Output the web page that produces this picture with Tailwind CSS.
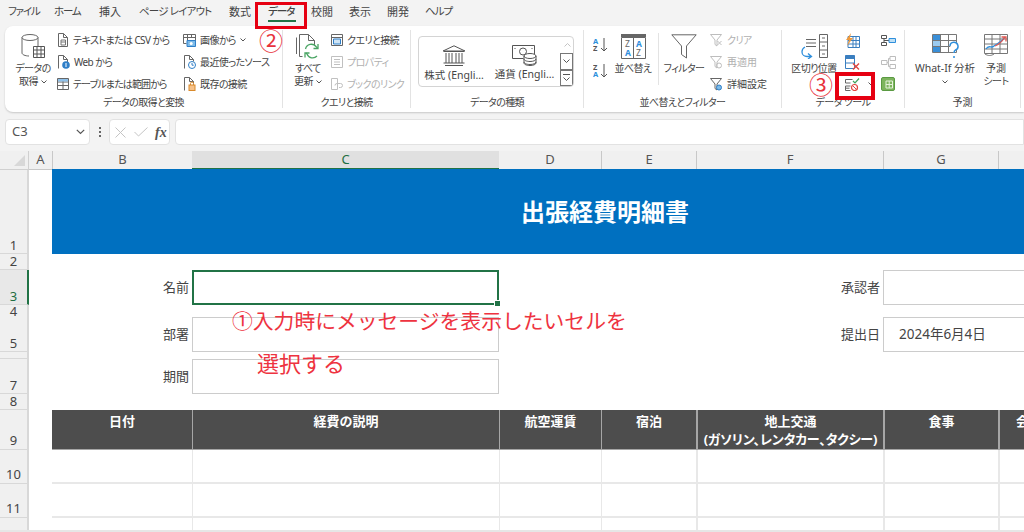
<!DOCTYPE html>
<html lang="ja">
<head>
<meta charset="utf-8">
<script src="https://cdn.jsdelivr.net/npm/@tailwindcss/browser@4"></script>
</head>
<body>
<div class="relative w-[1024px] h-[532px] overflow-hidden bg-[#f3f3f3] text-[#3c3c3c] font-['Noto_Sans','Noto_Sans_CJK_JP',sans-serif] [font-feature-settings:'palt']">

  <!-- tabs -->
  <div class="flex h-[26px] items-center text-[11px] text-[#444] leading-none pb-[3px]">
    <span class="ml-[8px] w-[46px] tracking-[-1.2px] text-[10.5px]">ファイル</span>
    <span class="w-[45px] tracking-[-1.2px] text-[10.5px]">ホーム</span>
    <span class="w-[40px]">挿入</span>
    <span class="w-[90px] tracking-[-0.8px] text-[10.5px]">ページ レイアウト</span>
    <span class="w-[39px]">数式</span>
    <span class="relative w-[43px] font-medium tracking-[-1px] text-[10.5px]">データ<span class="absolute left-0 top-[14px] w-[28px] h-[2px] bg-[#217346]"></span></span>
    <span class="w-[38px]">校閲</span>
    <span class="w-[38px]">表示</span>
    <span class="w-[38px]">開発</span>
    <span class="tracking-[-1px] text-[10.5px]">ヘルプ</span>
  </div>

  <!-- ribbon -->
  <div class="ml-[5px] h-[86px] flex bg-white rounded-l-lg shadow-[0_1px_2px_rgba(0,0,0,0.18)] text-[10px] tracking-[-0.6px] whitespace-nowrap leading-[13px] text-[#444]">

    <!-- group 1 -->
    <div class="w-[277px] flex flex-col">
      <div class="h-[69px] pt-[3px] pl-[8px] flex">
        <div class="w-[40px] flex flex-col items-center pt-[5px]">
          <svg class="w-[24px] h-[25px]" viewBox="0 0 24 25" fill="none" stroke="#666" stroke-width="1"><ellipse cx="9" cy="3.500" rx="8" ry="3"/><path d="M1 3.500V19c0 1.500 3 3 7 3M17 3.500V12"/><path d="M12.500 12.500h11v11h-11zM12.500 16h11M12.500 20h11M16 12.500v11M20 12.500v11" stroke="#555"/></svg>
          <span class="mt-[3px]">データの</span>
          <span class="flex items-center gap-[3px]">取得<svg class="w-[6px] h-[4px]" viewBox="0 0 6 4" fill="none" stroke="#555"><path d="M.5.500 3 3 5.500.5"/></svg></span>
        </div>
        <div class="ml-[5px] w-[125px] flex flex-col">
          <div class="h-[22px] flex items-center gap-[5px]">
            <svg class="w-[10px] h-[14px]" viewBox="0 0 10 14" fill="none" stroke="#666"><path d="M.5.500h5l4 4v9h-9z"/><path d="M5.500.5v4h4"/><path d="M3 7h4.500v5H3zM3 9h4.500" stroke="#777"/></svg>
            <span>テキストまたは CSV から</span>
          </div>
          <div class="h-[22px] flex items-center gap-[4px]">
            <svg class="w-[12px] h-[14px]" viewBox="0 0 12 14" fill="none" stroke="#666"><path d="M.5 13.500V.5h5l4 4v3M5.500.5v4h4"/><circle cx="8" cy="10" r="3.800" fill="#2f7fc8" stroke="none"/><path d="M8 8v4" stroke="#fff"/></svg>
            <span>Web から</span>
          </div>
          <div class="h-[22px] flex items-center gap-[4px] -ml-[1px]">
            <svg class="w-[12px] h-[12px]" viewBox="0 0 12 12" fill="none" stroke="#666"><path d="M.5.500h11v11H.5zM.5 4h11M.5 7.500h11M6 .5v11"/><path d="M1 1h10v2.500H1z" fill="#8fc1ea" stroke="none"/></svg>
            <span class="tracking-[-0.9px]">テーブルまたは範囲から</span>
          </div>
        </div>
        <div class="flex flex-col">
          <div class="h-[22px] flex items-center gap-[4px]">
            <svg class="w-[13px] h-[13px]" viewBox="0 0 13 13" fill="none" stroke="#666"><path d="M.5.500h12v7M.5.500v9h3M.5 3.500h12M4.500.5v6M8.500.5v3"/><path d="M4 6.500h8.500v6H4z" fill="#7dbbe8" stroke="#2f7fc8"/><circle cx="8.200" cy="9.500" r="1.500" fill="#fff" stroke="none"/></svg>
            <span class="flex items-center gap-[4px]">画像から<svg class="w-[6px] h-[4px]" viewBox="0 0 6 4" fill="none" stroke="#555"><path d="M.5.500 3 3 5.500.5"/></svg></span>
          </div>
          <div class="h-[22px] flex items-center gap-[4px] pl-[1px]">
            <svg class="w-[12px] h-[14px]" viewBox="0 0 12 14" fill="none" stroke="#666"><path d="M.5 13.500V.5h5l4 4v2M5.500.5v4h4"/><circle cx="8" cy="10" r="3.500" fill="#fff" stroke="#2f7fc8"/><path d="M8 8v2.200h1.700" stroke="#2f7fc8"/></svg>
            <span>最近使ったソース</span>
          </div>
          <div class="h-[22px] flex items-center gap-[4px] pl-[1px]">
            <svg class="w-[12px] h-[14px]" viewBox="0 0 12 14" fill="none" stroke="#666"><path d="M.5 13.500V.5h5l4 4v2M5.500.5v4h4"/><rect x="5" y="8" width="6" height="5.500" fill="#f6c28b" stroke="#d98a2b"/><path d="M6.500 8V6.500a1.500 1.500 0 0 1 3 0V8" stroke="#d98a2b"/></svg>
            <span>既存の接続</span>
          </div>
        </div>
      </div>
      <div class="text-center pt-[1px]">データの取得と変換</div>
    </div>
    <div class="w-px my-[4px] bg-[#e3e3e3]"></div>

    <!-- group 2 -->
    <div class="w-[127px] flex flex-col">
      <div class="h-[69px] pt-[3px] pl-[5px] flex">
        <div class="w-[40px] flex flex-col items-center pt-[5px]">
          <svg class="w-[26px] h-[25px]" viewBox="0 0 26 25" fill="none" stroke="#666"><path d="M1.500 20V3.500M4.500 22.500V.5h9l6 6v5M13.500.5v6h6M4.500 22.500h3"/><path d="M10.500 15a6 6 0 0 1 10.500-2.500l1.500 1.500M22 22a6 6 0 0 1-10-2l-1-1" stroke="#4aa564" stroke-width="1.300"/><path d="M23 10v4.500h-4.500M10 23.500V19h4.500" stroke="#4aa564" stroke-width="1.300"/></svg>
          <span class="mt-[3px]">すべて</span>
          <span class="flex items-center gap-[3px]">更新<svg class="w-[6px] h-[4px]" viewBox="0 0 6 4" fill="none" stroke="#555"><path d="M.5.500 3 3 5.500.5"/></svg></span>
        </div>
        <div class="ml-[3px] flex flex-col">
          <div class="h-[22px] flex items-center gap-[4px]">
            <svg class="w-[12px] h-[12px]" viewBox="0 0 12 12" fill="none" stroke="#666"><path d="M.5.500h11v11H.5zM.5 3.500h11"/><path d="M2.500 5h7v5h-7z" fill="#cfe5f6" stroke="#2f7fc8"/></svg>
            <span>クエリと接続</span>
          </div>
          <div class="h-[22px] flex items-center gap-[4px] text-[#b0b0b0]">
            <svg class="w-[12px] h-[12px]" viewBox="0 0 12 12" fill="none" stroke="#c0c0c0"><path d="M.5.500h11v11H.5zM3 3.500h6M3 6h6M3 8.500h6"/></svg>
            <span>プロパティ</span>
          </div>
          <div class="h-[22px] flex items-center gap-[4px] text-[#b0b0b0]">
            <svg class="w-[12px] h-[12px]" viewBox="0 0 12 12" fill="none" stroke="#c0c0c0"><path d="M.5.500h6v11h-6zM4 7.500a2 2 0 0 1 2-2h3.500a2 2 0 0 1 0 4H8"/></svg>
            <span>ブックのリンク</span>
          </div>
        </div>
      </div>
      <div class="text-center pt-[1px]">クエリと接続</div>
    </div>
    <div class="w-px my-[4px] bg-[#e3e3e3]"></div>

    <!-- group 3 -->
    <div class="w-[172px] flex flex-col">
      <div class="h-[69px] pt-[10px] pl-[7px]">
        <div class="w-[156px] h-[51px] flex border border-[#d4d4d4] rounded-[4px] overflow-hidden">
          <div class="w-[70px] flex flex-col items-center pt-[8px]">
            <svg class="w-[24px] h-[21px]" viewBox="0 0 24 21" fill="none" stroke="#555"><path d="M12 .8 23 6H1zM2 6.500h20M3 20.500h18M1.500 18h21M4 8v10M7 8v10M10 8v10M14 8v10M17 8v10M20 8v10"/></svg>
            <span class="mt-[3px] text-[10.5px] tracking-normal">株式 (Engli…</span>
          </div>
          <div class="w-[71px] flex flex-col items-center pt-[7px]">
            <svg class="w-[25px] h-[22px]" viewBox="0 0 25 22" fill="none" stroke="#555"><path d="M.5 1.500h22v11h-6M.5 1.500v13h11"/><circle cx="11" cy="7.500" r="3.500"/><path d="M3 4v1M20 4v1"/><ellipse cx="18" cy="12" rx="6" ry="2.500" fill="#fff"/><path d="M12 12v7c0 1.400 2.700 2.500 6 2.500s6-1.100 6-2.500v-7M12 15c0 1.400 2.700 2.500 6 2.500s6-1.100 6-2.500M12 18c0 1.400 2.700 2.500 6 2.500s6-1.100 6-2.500"/></svg>
            <span class="mt-[2px] text-[10.5px] tracking-normal">通貨 (Engli…</span>
          </div>
          <div class="ml-[1px] flex-1 flex flex-col items-stretch">
            <div class="h-[17px] flex items-center justify-center"><svg class="w-[7px] h-[4px]" viewBox="0 0 7 4" fill="none" stroke="#c4c4c4"><path d="M.5 3.500 3.500.5l3 3"/></svg></div>
            <div class="h-[17px] flex items-center justify-center border border-[#777] -ml-px"><svg class="w-[7px] h-[4px]" viewBox="0 0 7 4" fill="none" stroke="#555"><path d="M.5.500l3 3 3-3"/></svg></div>
            <div class="h-[17px] flex flex-col gap-[2px] items-center justify-center border border-[#777] -ml-px"><span class="w-[7px] h-px bg-[#555]"></span><svg class="w-[7px] h-[4px]" viewBox="0 0 7 4" fill="none" stroke="#555"><path d="M.5.500l3 3 3-3"/></svg></div>
          </div>
        </div>
      </div>
      <div class="text-center pt-[1px]">データの種類</div>
    </div>
    <div class="w-px my-[4px] bg-[#e3e3e3]"></div>

    <!-- group 4 -->
    <div class="w-[197px] flex flex-col">
      <div class="h-[69px] pt-[3px] pl-[9px] flex">
        <div class="w-[15px] flex flex-col pt-[8px] gap-[11px] tracking-normal">
          <svg class="w-[15px] h-[15px]" viewBox="0 0 15 15" fill="none"><text x="0" y="6.500" font-size="7.500" font-weight="700" fill="#2f8fdc">A</text><text x="0" y="14" font-size="7.500" font-weight="700" fill="#555">Z</text><path d="M11 1v13M8 11l3 3 3-3" stroke="#555"/></svg>
          <svg class="w-[15px] h-[15px]" viewBox="0 0 15 15" fill="none"><text x="0" y="6.500" font-size="7.500" font-weight="700" fill="#555">Z</text><text x="0" y="14" font-size="7.500" font-weight="700" fill="#2f8fdc">A</text><path d="M11 1v13M8 11l3 3 3-3" stroke="#555"/></svg>
        </div>
        <div class="ml-[5px] w-[40px] flex flex-col items-center pt-[5px]">
          <svg class="w-[25px] h-[25px] tracking-normal" viewBox="0 0 25 25" fill="none"><path d="M.5 3.500h24v21H.5zM12.500 3.500v21" stroke="#666"/><path d="M0 0h25v3H0z" fill="#666"/><text x="4" y="13" font-size="8.500" fill="#666">Z</text><text x="4" y="22" font-size="8.500" font-weight="700" fill="#2f8fdc">A</text><text x="15" y="13" font-size="8.500" font-weight="700" fill="#2f8fdc">A</text><text x="15" y="22" font-size="8.500" fill="#666">Z</text></svg>
          <span class="mt-[3px]">並べ替え</span>
        </div>
        <div class="ml-[5px] w-px h-[52px] mt-[4px] bg-[#e3e3e3]"></div>
        <div class="ml-[5px] w-[40px] flex flex-col items-center pt-[5px]">
          <svg class="w-[26px] h-[25px]" viewBox="0 0 26 25" fill="none" stroke="#666"><path d="M.8.800h24.400L15.500 12v12l-5-3.500V12z"/></svg>
          <span class="mt-[3px]">フィルター</span>
        </div>
        <div class="ml-[6px] flex flex-col">
          <div class="h-[22px] flex items-center gap-[5px] text-[#b0b0b0]">
            <svg class="w-[12px] h-[13px]" viewBox="0 0 12 13" fill="none" stroke="#bdbdbd"><path d="M.5.500h11L7 6v6L5 10.500V6zM7.500 7l4 4M11.500 7l-4 4"/></svg>
            <span>クリア</span>
          </div>
          <div class="h-[22px] flex items-center gap-[5px] text-[#b0b0b0]">
            <svg class="w-[12px] h-[13px]" viewBox="0 0 12 13" fill="none" stroke="#bdbdbd"><path d="M.5.500h11L7 6v6L5 10.500V6z"/><circle cx="9" cy="9.500" r="2.500"/></svg>
            <span class="tracking-normal">再適用</span>
          </div>
          <div class="h-[22px] flex items-center gap-[5px]">
            <svg class="w-[12px] h-[13px]" viewBox="0 0 12 13" fill="none" stroke="#666"><path d="M.5.500h11L7 6v6L5 10.500V6z"/><circle cx="9" cy="9.500" r="2.500" fill="#7dbbe8" stroke="#2f7fc8"/></svg>
            <span class="tracking-normal">詳細設定</span>
          </div>
        </div>
      </div>
      <div class="text-center pt-[1px]">並べ替えとフィルター</div>
    </div>
    <div class="w-px my-[4px] bg-[#e3e3e3]"></div>

    <!-- group 5 -->
    <div class="w-[122px] flex flex-col">
      <div class="h-[69px] pt-[3px] pl-[7px] flex">
        <div class="w-[50px] flex flex-col items-center pt-[5px]">
          <svg class="w-[28px] h-[25px]" viewBox="0 0 28 25" fill="none"><path d="M6 5.500h10M6 9h10M6 12.500h10" stroke="#666"/><path d="M19.500.5h8v23h-8zM19.500 8h8M19.500 16h8M22 4h3M22 12h3M22 20h3" stroke="#666"/><path d="M5 13a5.500 5.500 0 0 0-3 5c0 2.800 2.500 4.500 5 4.500h4M8 19.500l3.500 3-3.500 2.500" stroke="#2f8fdc" stroke-width="1.300"/></svg>
          <span class="mt-[3px]">区切り位置</span>
        </div>
        <div class="ml-[6px] w-[30px] flex flex-col">
          <div class="h-[22px] flex items-center">
            <svg class="w-[15px] h-[15px]" viewBox="0 0 15 15" fill="none"><path d="M3 3.500h11.500v11H3zM3 7.500h11.500M3 11h11.500M8 3.500v11M11 3.500v11" stroke="#3a7fc0"/><path d="M6 0 1 7h3l-2 6 6-8H5z" fill="#ef9a3c"/></svg>
          </div>
          <div class="h-[22px] flex items-center">
            <svg class="w-[15px] h-[15px]" viewBox="0 0 15 15" fill="none"><path d="M.5.500h9v13h-9z" stroke="#3a7fc0"/><path d="M.5.500h9v3.500h-9z" fill="#3a7fc0"/><path d="M.5 8h9" stroke="#3a7fc0"/><path d="M8 8.500l6 6M14 8.500l-6 6" stroke="#e2463f" stroke-width="1.400"/></svg>
          </div>
          <div class="h-[22px] flex items-center gap-[8px]">
            <svg class="w-[15px] h-[13px]" viewBox="0 0 15 13" fill="none"><path d="M.5 1.500h7M.5 1.500v3.500M.5 5h5M.5 8h5M.5 8v4.500M.5 10.200h4M.5 12.500h5" stroke="#666"/><path d="M8 3 10 5l4-4.500" stroke="#3fa45b" stroke-width="1.200"/><circle cx="9.500" cy="9.500" r="3" stroke="#e2463f" stroke-width="1.200"/><path d="M7.500 7.500l4 4" stroke="#e2463f"/></svg>
            <svg class="w-[6px] h-[4px]" viewBox="0 0 6 4" fill="none" stroke="#555"><path d="M.5.500 3 3 5.500.5"/></svg>
          </div>
        </div>
        <div class="ml-[6px] flex flex-col">
          <div class="h-[22px] flex items-center">
            <svg class="w-[15px] h-[11px]" viewBox="0 0 15 11" fill="none"><path d="M.5.500h5v3h-5zM.5 7.500h5v3h-5zM3 3.500v4" stroke="#555"/><path d="M3 5.500h5" stroke="#555"/><path d="M8 3.500h6.500v4H8z" fill="#bfe0f5" stroke="#2f8fdc"/></svg>
          </div>
          <div class="h-[22px] flex items-center">
            <svg class="w-[15px] h-[13px]" viewBox="0 0 15 13" fill="none" stroke="#bdbdbd"><path d="M.5 4.500h5.500v4H.5zM9 .5h5.500v4H9zM9 8.500h5.500v4H9zM6 6.500h1.500V2.500H9M7.500 6.500v4H9"/></svg>
          </div>
          <div class="h-[22px] flex items-center">
            <svg class="w-[14px] h-[14px]" viewBox="0 0 14 14" fill="none"><path d="M2 .5h10a1.500 1.500 0 0 1 1.500 1.500v10a1.500 1.500 0 0 1-1.500 1.500H2A1.500 1.500 0 0 1 .5 12V2A1.500 1.500 0 0 1 2 .5z" fill="#7db45e" stroke="#5a9a42"/><path d="M5 4h6.500v7H5zM8.200 4v7M5 7.500h6.500" stroke="#e6f2dc"/></svg>
          </div>
        </div>
      </div>
      <div class="text-center pt-[1px]">データ ツール</div>
    </div>
    <div class="w-px my-[4px] bg-[#e3e3e3]"></div>

    <!-- group 6 -->
    <div class="w-[115px] flex flex-col">
      <div class="h-[69px] pt-[3px] pl-[7px] flex">
        <div class="w-[66px] flex flex-col items-center pt-[5px]">
          <svg class="w-[27px] h-[25px]" viewBox="0 0 27 25" fill="none"><path d="M.5.500h24v18H.5zM.5 6.500h24M.5 12.500h24M8.500.5v18M16.500.5v18" stroke="#777"/><path d="M1 1h7v5H1zM1 13h7v5H1z" fill="#3a8fd8"/><path d="M1 7h7v5H1z" fill="#9ccbef"/><path d="M18 12a4 4 0 1 1 5.500 4c-1.200.6-1.500 1.300-1.500 3" fill="#fff" stroke="#2f8fdc" stroke-width="1.500"/><circle cx="22" cy="23" r="1" fill="#2f8fdc"/></svg>
          <span class="mt-[3px] text-[10.5px] tracking-normal">What-If 分析</span>
          <svg class="mt-[5px] w-[6px] h-[4px]" viewBox="0 0 6 4" fill="none" stroke="#555"><path d="M.5.500 3 3 5.500.5"/></svg>
        </div>
        <div class="ml-[3px] w-[30px] flex flex-col items-center pt-[5px]">
          <svg class="w-[24px] h-[25px]" viewBox="0 0 24 25" fill="none"><path d="M.5.500h23v19H.5zM.5 5h23M.5 10h23M.5 15h23M8 .5v19M16 .5v19" stroke="#777"/><path d="M2 15c3-5 5 0 8-3s6-2 11-9" stroke="#2f8fdc" stroke-width="1.300"/><path d="M11 12c3-1 6-3 10-9M17.500 3H22v4.500" stroke="#e2574f" stroke-width="1.300"/><path d="M1 20c3 2 6 2 9 0" stroke="#777"/></svg>
          <span class="mt-[3px] tracking-normal">予測</span>
          <span>シート</span>
        </div>
      </div>
      <div class="text-center pt-[1px] tracking-normal">予測</div>
    </div>
    <div class="w-px my-[4px] bg-[#e3e3e3]"></div>
  </div>

  <!-- formula bar -->
  <div class="mt-[7px] h-[26px] flex">
    <div class="ml-[5px] w-[85px] flex items-center justify-between pl-[6px] pr-[4px] bg-white border border-[#e2e2e2] rounded-[4px] text-[13px] text-[#555]">
      C3
      <svg class="w-[9px] h-[6px]" viewBox="0 0 9 6" fill="none" stroke="#555" stroke-width="1.200"><path d="M.8.800 4.500 4.500 8.200.8"/></svg>
    </div>
    <div class="w-[19px] flex flex-col items-center justify-center gap-[2px]">
      <span class="w-[2px] h-[2px] bg-[#666]"></span><span class="w-[2px] h-[2px] bg-[#666]"></span><span class="w-[2px] h-[2px] bg-[#666]"></span>
    </div>
    <div class="w-[61px] flex items-center bg-white border border-[#e2e2e2] rounded-[4px]">
      <svg class="ml-[5px] w-[11px] h-[11px]" viewBox="0 0 11 11" fill="none" stroke="#c4c4c4"><path d="M.5.500l10 10M10.500.5l-10 10"/></svg>
      <svg class="ml-[8px] w-[14px] h-[10px]" viewBox="0 0 14 10" fill="none" stroke="#c4c4c4"><path d="M.5 5l4 4 9-8.500"/></svg>
      <span class="ml-[7px] font-['Liberation_Serif',serif] italic font-bold text-[14px] text-[#555]">fx</span>
    </div>
    <div class="ml-[5px] flex-1 bg-white border border-[#e2e2e2] rounded-l-[4px]"></div>
  </div>

  <!-- sheet -->
  <div class="mt-[6px] text-[13px] text-[#444]">
    <!-- column headers -->
    <div class="grid grid-cols-[29px_23px_140px_307px_102px_95px_187px_115px_60px] h-[18px] w-[1058px] bg-[#f0f0f0] text-center leading-[17px] text-[#555]">
      <div class="relative border-r border-b border-[#d0d0d0]"><svg class="absolute right-[3px] bottom-[3px] w-[11px] h-[11px]" viewBox="0 0 11 11"><path d="M11 0v11H0z" fill="#d8d8d8"/></svg></div>
      <div class="border-b border-[#c8c8c8]">A</div>
      <div class="border-l border-b border-[#c8c8c8]">B</div>
      <div class="bg-[#e0e0e0] border-b-2 border-[#217346] text-[#1e6e42]">C</div>
      <div class="border-b border-[#c8c8c8]">D</div>
      <div class="border-l border-b border-[#c8c8c8]">E</div>
      <div class="border-l border-b border-[#c8c8c8]">F</div>
      <div class="border-l border-b border-[#c8c8c8]">G</div>
      <div class="border-l border-b border-[#c8c8c8]"></div>
    </div>

    <!-- row 1 -->
    <div class="grid grid-cols-[29px_23px_1006px] h-[85px] w-[1058px] bg-white">
      <div class="flex items-end justify-center bg-[#f0f0f0] border-r-2 border-b border-[#d8d8d8] leading-[16px]">1</div>
      <div></div>
      <div class="flex items-center justify-center pl-[100px] bg-[#0070c0] text-white font-bold text-[24px]">出張経費明細書</div>
    </div>

    <!-- row 2 -->
    <div class="grid grid-cols-[29px_1029px] h-[16px] bg-white">
      <div class="flex items-end justify-center bg-[#f0f0f0] border-r-2 border-b border-[#d8d8d8] leading-[15px]">2</div>
      <div></div>
    </div>

    <!-- row 3 -->
    <div class="grid grid-cols-[29px_23px_140px_307px_384px_175px] h-[35px] bg-white w-[1058px]">
      <div class="flex items-end justify-center bg-[#e8e8e8] border-r-2 border-r-[#217346] border-b border-[#d8d8d8] text-[#1e6e42] leading-[16px]">3</div>
      <div></div>
      <div class="flex items-center justify-end pr-[3px]">名前</div>
      <div class="relative border-2 border-[#217346]"><span class="absolute -right-[3px] -bottom-[3px] w-[5px] h-[5px] bg-[#217346] outline outline-white"></span></div>
      <div class="flex items-center justify-end pr-[3px]">承認者</div>
      <div class="border border-[#cccccc]"></div>
    </div>

    <!-- row 4 -->
    <div class="grid grid-cols-[29px_1029px] h-[12px] bg-white">
      <div class="flex items-end justify-center bg-[#f0f0f0] border-r-2 border-b border-[#d8d8d8] leading-[12px]">4</div>
      <div></div>
    </div>

    <!-- row 5 -->
    <div class="grid grid-cols-[29px_23px_140px_307px_384px_175px] h-[35px] bg-white w-[1058px]">
      <div class="flex items-end justify-center bg-[#f0f0f0] border-r-2 border-b border-[#d8d8d8] leading-[16px]">5</div>
      <div></div>
      <div class="flex items-center justify-end pr-[3px]">部署</div>
      <div class="border border-[#cccccc]"></div>
      <div class="flex items-center justify-end pr-[3px]">提出日</div>
      <div class="flex items-center pl-[15px] border border-[#cccccc] text-[13.500px]">2024年6月4日</div>
    </div>

    <!-- row 6 -->
    <div class="grid grid-cols-[29px_1029px] h-[7px] bg-white">
      <div class="bg-[#f0f0f0] border-r-2 border-b border-[#d8d8d8]"></div>
      <div></div>
    </div>

    <!-- row 7 -->
    <div class="grid grid-cols-[29px_23px_140px_307px] h-[35px] bg-white w-[1058px]">
      <div class="flex items-end justify-center bg-[#f0f0f0] border-r-2 border-b border-[#d8d8d8] leading-[16px]">7</div>
      <div></div>
      <div class="flex items-center justify-end pr-[3px]">期間</div>
      <div class="border border-[#cccccc]"></div>
    </div>

    <!-- row 8 -->
    <div class="grid grid-cols-[29px_1029px] h-[16px] bg-white">
      <div class="flex items-end justify-center bg-[#f0f0f0] border-r-2 border-b border-[#d8d8d8] leading-[15px]">8</div>
      <div></div>
    </div>

    <!-- row 9 table head -->
    <div class="grid grid-cols-[29px_23px_140px_307px_102px_95px_187px_115px_60px] h-[40px] w-[1058px] bg-white">
      <div class="flex items-end justify-center bg-[#f0f0f0] border-r-2 border-b border-[#d8d8d8] leading-[18px]">9</div>
      <div></div>
      <div class="bg-[#4d4d4d] text-white font-bold text-[13px] leading-[18px] pt-[2px] text-center border-b border-[#a6a6a6]">日付</div>
      <div class="bg-[#4d4d4d] text-white font-bold text-[13px] leading-[18px] pt-[2px] text-center border-l border-b border-[#a6a6a6]">経費の説明</div>
      <div class="bg-[#4d4d4d] text-white font-bold text-[13px] leading-[18px] pt-[2px] text-center border-l border-b border-[#a6a6a6]">航空運賃</div>
      <div class="bg-[#4d4d4d] text-white font-bold text-[13px] leading-[18px] pt-[2px] text-center border-l border-b border-[#a6a6a6]">宿泊</div>
      <div class="bg-[#4d4d4d] text-white font-bold text-[13px] leading-[18px] pt-[2px] text-center border-l-2 border-b border-[#a6a6a6]">地上交通<br><span class="tracking-[-0.2px]">(ガソリン、レンタカー、タクシー)</span></div>
      <div class="bg-[#4d4d4d] text-white font-bold text-[13px] leading-[18px] pt-[2px] text-center border-l-2 border-b border-[#a6a6a6]">食事</div>
      <div class="bg-[#4d4d4d] text-white font-bold text-[13px] leading-[18px] pt-[2px] text-center border-l-2 border-b border-[#a6a6a6]">会計</div>
    </div>

    <!-- row 10 -->
    <div class="grid grid-cols-[29px_23px_140px_307px_102px_95px_187px_115px_60px] h-[34px] w-[1058px] bg-white">
      <div class="flex items-end justify-center bg-[#f0f0f0] border-r-2 border-b border-[#d8d8d8] leading-[18px]">10</div>
      <div></div>
      <div class="border-b-2 border-[#e8e8e8]"></div><div class="border-l border-b-2 border-[#e8e8e8]"></div><div class="border-l border-b-2 border-[#e8e8e8]"></div><div class="border-l border-b-2 border-[#e8e8e8]"></div><div class="border-l-2 border-b-2 border-[#e8e8e8]"></div><div class="border-l-2 border-b-2 border-[#e8e8e8]"></div><div class="border-l-2 border-b-2 border-[#e8e8e8]"></div>
    </div>

    <!-- row 11 -->
    <div class="grid grid-cols-[29px_23px_140px_307px_102px_95px_187px_115px_60px] h-[34px] w-[1058px] bg-white">
      <div class="flex items-end justify-center bg-[#f0f0f0] border-r-2 border-b border-[#d8d8d8] leading-[18px]">11</div>
      <div></div>
      <div class="border-b-2 border-[#e8e8e8]"></div><div class="border-l border-b-2 border-[#e8e8e8]"></div><div class="border-l border-b-2 border-[#e8e8e8]"></div><div class="border-l border-b-2 border-[#e8e8e8]"></div><div class="border-l-2 border-b-2 border-[#e8e8e8]"></div><div class="border-l-2 border-b-2 border-[#e8e8e8]"></div><div class="border-l-2 border-b-2 border-[#e8e8e8]"></div>
    </div>

    <!-- row 12 -->
    <div class="grid grid-cols-[29px_23px_140px_307px_102px_95px_187px_115px_60px] h-[12px] w-[1058px] bg-white">
      <div class="bg-[#f0f0f0] border-r-2 border-[#d8d8d8]"></div>
      <div></div>
      <div></div><div class="border-l border-[#e8e8e8]"></div><div class="border-l border-[#e8e8e8]"></div><div class="border-l border-[#e8e8e8]"></div><div class="border-l-2 border-[#e8e8e8]"></div><div class="border-l-2 border-[#e8e8e8]"></div><div class="border-l-2 border-[#e8e8e8]"></div>
    </div>

    <!-- bottom edge -->
    <div class="h-[2px] bg-[#e6e6e6]"></div>
  </div>

  <!-- annotations -->
  <div class="absolute left-[255px] top-[2px] w-[52px] h-[27px] border-[3px] border-[#e60012]"></div>
  <div class="absolute left-[835px] top-[72px] w-[40px] h-[28px] border-[4px] border-[#e60012]"></div>
  <div class="absolute left-[258px] top-[27px] w-[26px] text-center text-[#e8323c] text-[24px] leading-[28px]">②</div>
  <div class="absolute left-[808px] top-[71px] w-[26px] text-center text-[#e8323c] text-[24px] leading-[28px]">③</div>
  <div class="absolute left-[232px] top-[304px] whitespace-nowrap text-[#ee3340] text-[20.800px] leading-[32px] [font-feature-settings:normal] font-['Noto_Sans_CJK_JP',sans-serif]">①入力時にメッセージを表示したいセルを</div>
  <div class="absolute left-[257px] top-[346px] whitespace-nowrap text-[#ee3340] text-[22px] leading-[32px] [font-feature-settings:normal] font-['Noto_Sans_CJK_JP',sans-serif]">選択する</div>
</div>
</body>
</html>
